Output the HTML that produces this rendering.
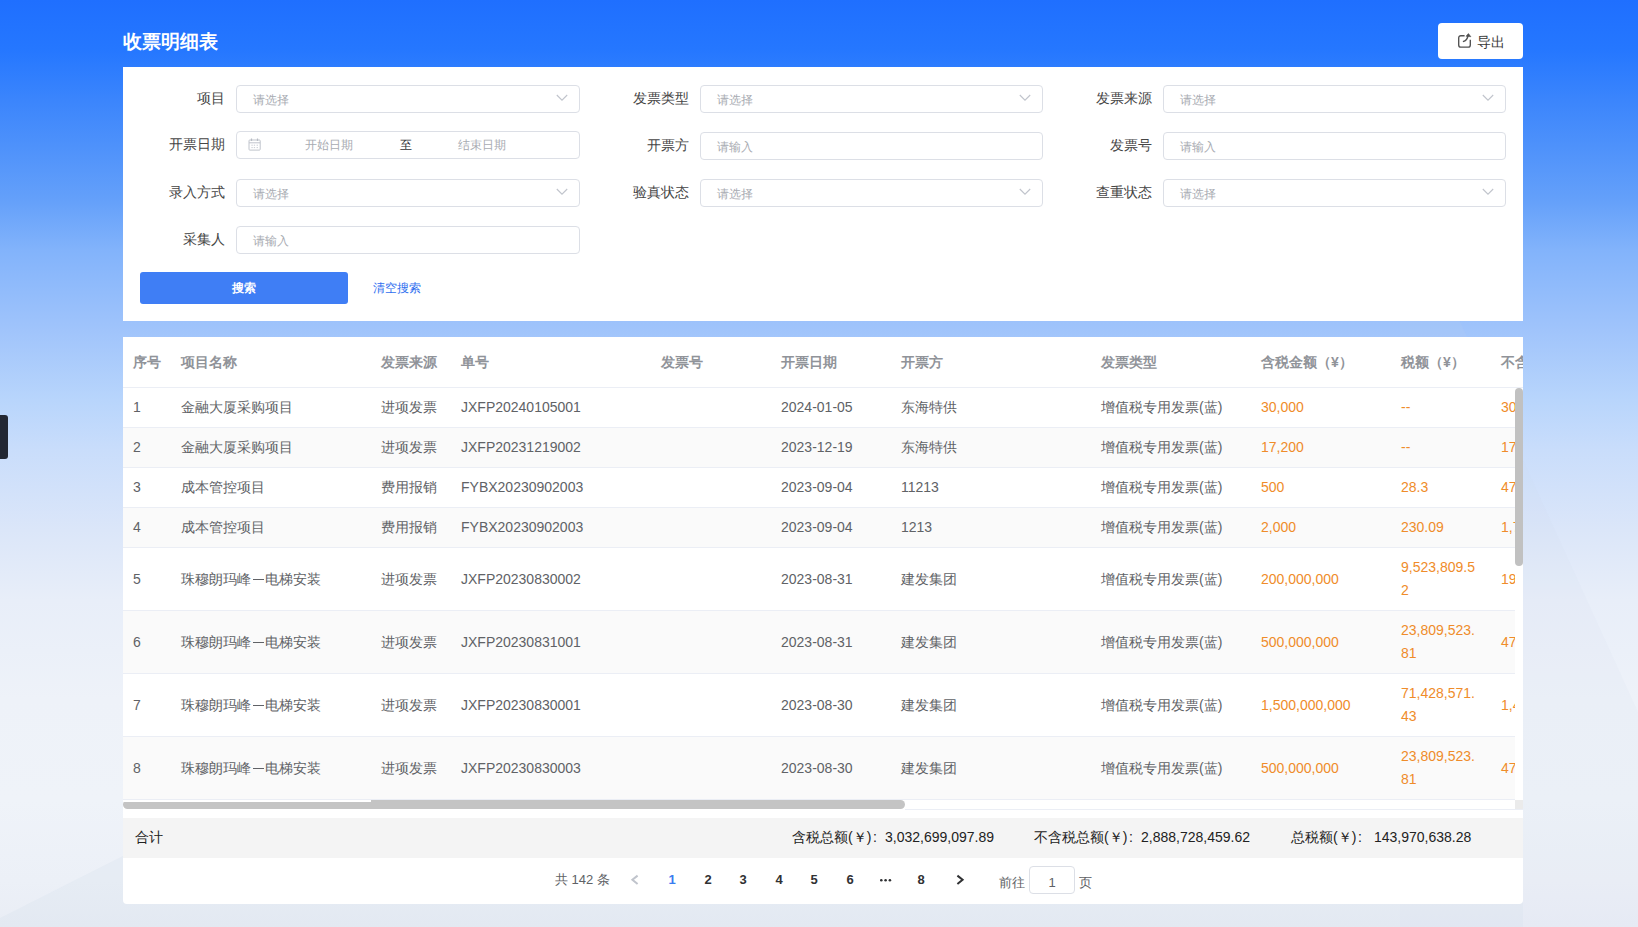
<!DOCTYPE html><html><head><meta charset="utf-8"><style>
*{box-sizing:border-box;margin:0;padding:0}
html,body{width:1638px;height:927px;overflow:hidden}
body{position:relative;font-family:"Liberation Sans",sans-serif;color:#606266;
background:linear-gradient(180deg,#1f6fff 0px,#2577ff 50px,#3b85fc 100px,#64a0fa 200px,#82b3fb 250px,#a0c4fb 330px,#b8d5fc 400px,#c9ddfb 450px,#dbe6f9 530px,#e8eef9 600px,#eef2f9 700px,#eff3f9 800px,#ecf0f7 880px,#e9edf5 927px)}
.a{position:absolute}
.title{left:123px;top:31px;font-size:19px;line-height:21px;font-weight:bold;color:#fff;white-space:nowrap}
.export{left:1438px;top:23px;width:85px;height:36px;background:#fff;border-radius:4px}
.export span{position:absolute;left:39px;top:11px;font-size:14px;line-height:16px;color:#3a3a3a}
.card1{left:123px;top:67px;width:1400px;height:254px;background:#fff}
.lbl{font-size:14px;color:#454545;text-align:right;width:120px;line-height:26px;white-space:nowrap}
.inp{height:28px;border:1px solid #dcdfe6;border-radius:4px;background:#fff;font-size:12px;color:#a8abb2;line-height:26px;padding-left:16px;padding-top:1px;white-space:nowrap}
.btn{left:140px;top:272px;width:208px;height:32px;background:#3f7ef5;border-radius:3px;color:#fff;font-size:12px;font-weight:bold;text-align:center;line-height:33px}
.link{left:373px;top:280px;font-size:12px;color:#2f6fef;line-height:16px;white-space:nowrap}
.card2{left:123px;top:337px;width:1400px;height:567px;background:#fff;border-radius:0 0 4px 4px;overflow:hidden}
.th{top:0;height:50px;line-height:50px;font-size:14px;font-weight:bold;color:#909399;white-space:nowrap}
.td{font-size:14px;line-height:23px;color:#606266;white-space:nowrap}
.or{color:#ef8c2a}
.dash{display:inline-block;width:14px;height:23px;position:relative;vertical-align:top}
.dash:after{content:'';position:absolute;left:2px;right:1px;top:11px;height:1px;background:#606266}
.st{font-size:14px;line-height:22px;color:#222;white-space:nowrap}
.pg{font-size:13px;line-height:18px;font-weight:bold;white-space:nowrap}
.tab{left:0;top:415px;width:8px;height:44px;background:#222733;border-radius:0 3px 3px 0}
</style></head><body>
<svg class="a" style="left:0;top:0" width="1638" height="927"><polygon points="1400,190 1638,712 1638,927 1400,927" fill="#cfd9e8" fill-opacity="0.1"/><polygon points="0,927 0,918 123,856 1523,856 1523,927" fill="#d5deea" fill-opacity="0.25"/></svg>
<div class="a title">收票明细表</div>
<div class="a export"><svg class="a" style="left:19px;top:10px" width="16" height="16" viewBox="0 0 16 16"><path d="M7.6 2.7H3.9A2.2 2.2 0 0 0 1.7 4.9v7a2.2 2.2 0 0 0 2.2 2.2h7.2a2.2 2.2 0 0 0 2.2-2.2V6.7" fill="none" stroke="#505050" stroke-width="1.35"/><path d="M5.9 8.6C8.6 8.1 10.6 6.6 11.1 2.2" fill="none" stroke="#505050" stroke-width="1.35"/><path d="M9 3.3L11.4 0.6L13.9 3.7Z" fill="#505050" stroke="#505050" stroke-width="0.6" stroke-linejoin="round"/></svg><span>导出</span></div>
<div class="a card1"></div>
<div class="a lbl" style="left:104.5px;top:85px">项目</div>
<div class="a inp" style="left:236px;top:85px;width:344px">请选择<svg class="a" style="right:11.5px;top:8px" width="12" height="8" viewBox="0 0 12 8"><polyline points="0.8,1 6,6.2 11.2,1" fill="none" stroke="#c0c4cc" stroke-width="1.1"/></svg></div>
<div class="a lbl" style="left:568.5px;top:85px">发票类型</div>
<div class="a inp" style="left:700px;top:85px;width:343px">请选择<svg class="a" style="right:11.5px;top:8px" width="12" height="8" viewBox="0 0 12 8"><polyline points="0.8,1 6,6.2 11.2,1" fill="none" stroke="#c0c4cc" stroke-width="1.1"/></svg></div>
<div class="a lbl" style="left:1031.5px;top:85px">发票来源</div>
<div class="a inp" style="left:1163px;top:85px;width:343px">请选择<svg class="a" style="right:11.5px;top:8px" width="12" height="8" viewBox="0 0 12 8"><polyline points="0.8,1 6,6.2 11.2,1" fill="none" stroke="#c0c4cc" stroke-width="1.1"/></svg></div>
<div class="a lbl" style="left:104.5px;top:131px">开票日期</div>
<div class="a inp" style="left:236px;top:131px;width:344px;padding:0"><svg class="a" style="left:10px;top:6px" width="16" height="14" viewBox="0 0 16 14"><rect x="2" y="2" width="11.2" height="10.1" rx="0.8" fill="none" stroke="#c0c4cc" stroke-width="1"/><line x1="2" y1="4.8" x2="13.2" y2="4.8" stroke="#c0c4cc" stroke-width="1"/><line x1="4.5" y1="0.5" x2="4.5" y2="3" stroke="#b8bcc4" stroke-width="1.2"/><line x1="10.5" y1="0.5" x2="10.5" y2="3" stroke="#b8bcc4" stroke-width="1.2"/><g fill="#c8cbd2"><rect x="4.4" y="6.7" width="1.3" height="1"/><rect x="6.8" y="6.7" width="1.3" height="1"/><rect x="9.6" y="6.7" width="1.3" height="1"/><rect x="4.4" y="9.1" width="1.3" height="1"/><rect x="6.8" y="9.1" width="1.3" height="1"/><rect x="9.6" y="9.1" width="1.3" height="1"/></g></svg><span class="a" style="left:68px;top:0">开始日期</span><span class="a" style="left:163px;top:0;color:#303133">至</span><span class="a" style="left:221px;top:0">结束日期</span></div>
<div class="a lbl" style="left:568.5px;top:132px">开票方</div>
<div class="a inp" style="left:700px;top:132px;width:343px">请输入</div>
<div class="a lbl" style="left:1031.5px;top:132px">发票号</div>
<div class="a inp" style="left:1163px;top:132px;width:343px">请输入</div>
<div class="a lbl" style="left:104.5px;top:179px">录入方式</div>
<div class="a inp" style="left:236px;top:179px;width:344px">请选择<svg class="a" style="right:11.5px;top:8px" width="12" height="8" viewBox="0 0 12 8"><polyline points="0.8,1 6,6.2 11.2,1" fill="none" stroke="#c0c4cc" stroke-width="1.1"/></svg></div>
<div class="a lbl" style="left:568.5px;top:179px">验真状态</div>
<div class="a inp" style="left:700px;top:179px;width:343px">请选择<svg class="a" style="right:11.5px;top:8px" width="12" height="8" viewBox="0 0 12 8"><polyline points="0.8,1 6,6.2 11.2,1" fill="none" stroke="#c0c4cc" stroke-width="1.1"/></svg></div>
<div class="a lbl" style="left:1031.5px;top:179px">查重状态</div>
<div class="a inp" style="left:1163px;top:179px;width:343px">请选择<svg class="a" style="right:11.5px;top:8px" width="12" height="8" viewBox="0 0 12 8"><polyline points="0.8,1 6,6.2 11.2,1" fill="none" stroke="#c0c4cc" stroke-width="1.1"/></svg></div>
<div class="a lbl" style="left:104.5px;top:226px">采集人</div>
<div class="a inp" style="left:236px;top:226px;width:344px">请输入</div>
<div class="a btn">搜索</div>
<div class="a link">清空搜索</div>
<div class="a card2">
<div class="a th" style="left:10px">序号</div>
<div class="a th" style="left:58px">项目名称</div>
<div class="a th" style="left:258px">发票来源</div>
<div class="a th" style="left:338px">单号</div>
<div class="a th" style="left:538px">发票号</div>
<div class="a th" style="left:658px">开票日期</div>
<div class="a th" style="left:778px">开票方</div>
<div class="a th" style="left:978px">发票类型</div>
<div class="a th" style="left:1138px">含税金额（¥）</div>
<div class="a th" style="left:1278px">税额（¥）</div>
<div class="a th" style="left:1378px">不含税金额（¥）</div>
<div class="a" style="left:0;top:50px;width:1400px;height:1px;background:#ebeef5"></div>
<div class="a" style="left:0;top:51px;width:1392px;height:412px;overflow:hidden">
<div class="a" style="left:0;top:0px;width:1400px;height:39px;background:#fff"></div>
<div class="a" style="left:0;top:39px;width:1400px;height:1px;background:#ebeef5"></div>
<div class="a td" style="left:10px;top:8px">1</div>
<div class="a td" style="left:58px;top:8px">金融大厦采购项目</div>
<div class="a td" style="left:258px;top:8px">进项发票</div>
<div class="a td" style="left:338px;top:8px">JXFP20240105001</div>
<div class="a td" style="left:658px;top:8px">2024-01-05</div>
<div class="a td" style="left:778px;top:8px">东海特供</div>
<div class="a td" style="left:978px;top:8px">增值税专用发票(蓝)</div>
<div class="a td or" style="left:1138px;top:8px">30,000</div>
<div class="a td or" style="left:1278px;top:8px">--</div>
<div class="a td or" style="left:1378px;top:8px">30,000</div>
<div class="a" style="left:0;top:40px;width:1400px;height:39px;background:#fafafa"></div>
<div class="a" style="left:0;top:79px;width:1400px;height:1px;background:#ebeef5"></div>
<div class="a td" style="left:10px;top:48px">2</div>
<div class="a td" style="left:58px;top:48px">金融大厦采购项目</div>
<div class="a td" style="left:258px;top:48px">进项发票</div>
<div class="a td" style="left:338px;top:48px">JXFP20231219002</div>
<div class="a td" style="left:658px;top:48px">2023-12-19</div>
<div class="a td" style="left:778px;top:48px">东海特供</div>
<div class="a td" style="left:978px;top:48px">增值税专用发票(蓝)</div>
<div class="a td or" style="left:1138px;top:48px">17,200</div>
<div class="a td or" style="left:1278px;top:48px">--</div>
<div class="a td or" style="left:1378px;top:48px">17,200</div>
<div class="a" style="left:0;top:80px;width:1400px;height:39px;background:#fff"></div>
<div class="a" style="left:0;top:119px;width:1400px;height:1px;background:#ebeef5"></div>
<div class="a td" style="left:10px;top:88px">3</div>
<div class="a td" style="left:58px;top:88px">成本管控项目</div>
<div class="a td" style="left:258px;top:88px">费用报销</div>
<div class="a td" style="left:338px;top:88px">FYBX20230902003</div>
<div class="a td" style="left:658px;top:88px">2023-09-04</div>
<div class="a td" style="left:778px;top:88px">11213</div>
<div class="a td" style="left:978px;top:88px">增值税专用发票(蓝)</div>
<div class="a td or" style="left:1138px;top:88px">500</div>
<div class="a td or" style="left:1278px;top:88px">28.3</div>
<div class="a td or" style="left:1378px;top:88px">471.7</div>
<div class="a" style="left:0;top:120px;width:1400px;height:39px;background:#fafafa"></div>
<div class="a" style="left:0;top:159px;width:1400px;height:1px;background:#ebeef5"></div>
<div class="a td" style="left:10px;top:128px">4</div>
<div class="a td" style="left:58px;top:128px">成本管控项目</div>
<div class="a td" style="left:258px;top:128px">费用报销</div>
<div class="a td" style="left:338px;top:128px">FYBX20230902003</div>
<div class="a td" style="left:658px;top:128px">2023-09-04</div>
<div class="a td" style="left:778px;top:128px">1213</div>
<div class="a td" style="left:978px;top:128px">增值税专用发票(蓝)</div>
<div class="a td or" style="left:1138px;top:128px">2,000</div>
<div class="a td or" style="left:1278px;top:128px">230.09</div>
<div class="a td or" style="left:1378px;top:128px">1,769.91</div>
<div class="a" style="left:0;top:160px;width:1400px;height:62px;background:#fff"></div>
<div class="a" style="left:0;top:222px;width:1400px;height:1px;background:#ebeef5"></div>
<div class="a td" style="left:10px;top:180px">5</div>
<div class="a td" style="left:58px;top:180px">珠穆朗玛峰<i class=dash></i>电梯安装</div>
<div class="a td" style="left:258px;top:180px">进项发票</div>
<div class="a td" style="left:338px;top:180px">JXFP20230830002</div>
<div class="a td" style="left:658px;top:180px">2023-08-31</div>
<div class="a td" style="left:778px;top:180px">建发集团</div>
<div class="a td" style="left:978px;top:180px">增值税专用发票(蓝)</div>
<div class="a td or" style="left:1138px;top:180px">200,000,000</div>
<div class="a td or" style="left:1278px;top:168px">9,523,809.5<br>2</div>
<div class="a td or" style="left:1378px;top:180px">190,476,190.48</div>
<div class="a" style="left:0;top:223px;width:1400px;height:62px;background:#fafafa"></div>
<div class="a" style="left:0;top:285px;width:1400px;height:1px;background:#ebeef5"></div>
<div class="a td" style="left:10px;top:243px">6</div>
<div class="a td" style="left:58px;top:243px">珠穆朗玛峰<i class=dash></i>电梯安装</div>
<div class="a td" style="left:258px;top:243px">进项发票</div>
<div class="a td" style="left:338px;top:243px">JXFP20230831001</div>
<div class="a td" style="left:658px;top:243px">2023-08-31</div>
<div class="a td" style="left:778px;top:243px">建发集团</div>
<div class="a td" style="left:978px;top:243px">增值税专用发票(蓝)</div>
<div class="a td or" style="left:1138px;top:243px">500,000,000</div>
<div class="a td or" style="left:1278px;top:231px">23,809,523.<br>81</div>
<div class="a td or" style="left:1378px;top:243px">476,190,476.19</div>
<div class="a" style="left:0;top:286px;width:1400px;height:62px;background:#fff"></div>
<div class="a" style="left:0;top:348px;width:1400px;height:1px;background:#ebeef5"></div>
<div class="a td" style="left:10px;top:306px">7</div>
<div class="a td" style="left:58px;top:306px">珠穆朗玛峰<i class=dash></i>电梯安装</div>
<div class="a td" style="left:258px;top:306px">进项发票</div>
<div class="a td" style="left:338px;top:306px">JXFP20230830001</div>
<div class="a td" style="left:658px;top:306px">2023-08-30</div>
<div class="a td" style="left:778px;top:306px">建发集团</div>
<div class="a td" style="left:978px;top:306px">增值税专用发票(蓝)</div>
<div class="a td or" style="left:1138px;top:306px">1,500,000,000</div>
<div class="a td or" style="left:1278px;top:294px">71,428,571.<br>43</div>
<div class="a td or" style="left:1378px;top:306px">1,428,571,428.57</div>
<div class="a" style="left:0;top:349px;width:1400px;height:62px;background:#fafafa"></div>
<div class="a" style="left:0;top:411px;width:1400px;height:1px;background:#ebeef5"></div>
<div class="a td" style="left:10px;top:369px">8</div>
<div class="a td" style="left:58px;top:369px">珠穆朗玛峰<i class=dash></i>电梯安装</div>
<div class="a td" style="left:258px;top:369px">进项发票</div>
<div class="a td" style="left:338px;top:369px">JXFP20230830003</div>
<div class="a td" style="left:658px;top:369px">2023-08-30</div>
<div class="a td" style="left:778px;top:369px">建发集团</div>
<div class="a td" style="left:978px;top:369px">增值税专用发票(蓝)</div>
<div class="a td or" style="left:1138px;top:369px">500,000,000</div>
<div class="a td or" style="left:1278px;top:357px">23,809,523.<br>81</div>
<div class="a td or" style="left:1378px;top:369px">476,190,476.19</div>
</div>
<div class="a" style="left:1392px;top:51px;width:8px;height:178px;background:#c1c1c1;border-radius:4px"></div>
<div class="a" style="left:0;top:463px;width:782px;height:9px;background:#c4c4c4;border-radius:4.5px"></div>
<div class="a" style="left:0;top:463px;width:248px;height:2px;background:#fff"></div>
<div class="a" style="left:1392px;top:463px;width:8px;height:9px;background:#ebebeb"></div>
<div class="a" style="left:782px;top:472px;width:618px;height:1px;background:#ebeef5"></div>
<div class="a sum" style="left:0;top:481px;width:1400px;height:40px;background:#f4f4f4"></div>
<div class="a st" style="left:12px;top:489px">合计</div>
<div class="a st" style="left:669px;top:489px">含税总额(￥)</div>
<div class="a st" style="left:750px;top:489px">:</div>
<div class="a st" style="left:762px;top:489px">3,032,699,097.89</div>
<div class="a st" style="left:911px;top:489px">不含税总额(￥)</div>
<div class="a st" style="left:1006px;top:489px">:</div>
<div class="a st" style="left:1018px;top:489px">2,888,728,459.62</div>
<div class="a st" style="left:1168px;top:489px">总税额(￥)</div>
<div class="a st" style="left:1235px;top:489px">:</div>
<div class="a st" style="left:1251px;top:489px">143,970,638.28</div>
<svg class="a" style="left:755px;top:538px" width="16" height="8" viewBox="0 0 16 8"><g fill="#303133"><circle cx="3.3" cy="5.3" r="1.3"/><circle cx="7.6" cy="5.3" r="1.3"/><circle cx="11.9" cy="5.3" r="1.3"/></g></svg>
<div class="a pg" style="left:432px;top:534px;color:#606266;font-weight:normal">共 142 条</div>
<svg class="a" style="left:506px;top:536px" width="12" height="14" viewBox="0 0 12 14"><polyline points="8.6,2.6 3.4,6.8 8.6,11" fill="none" stroke="#c0c4cc" stroke-width="2"/></svg>
<div class="a pg" style="left:531px;top:534px;width:36px;text-align:center;color:#3a7cf0">1</div>
<div class="a pg" style="left:567px;top:534px;width:36px;text-align:center;color:#303133">2</div>
<div class="a pg" style="left:602px;top:534px;width:36px;text-align:center;color:#303133">3</div>
<div class="a pg" style="left:638px;top:534px;width:36px;text-align:center;color:#303133">4</div>
<div class="a pg" style="left:673px;top:534px;width:36px;text-align:center;color:#303133">5</div>
<div class="a pg" style="left:709px;top:534px;width:36px;text-align:center;color:#303133">6</div>
<div class="a pg" style="left:780px;top:534px;width:36px;text-align:center;color:#303133">8</div>
<svg class="a" style="left:831px;top:536px" width="12" height="14" viewBox="0 0 12 14"><polyline points="3.4,2.6 8.6,6.8 3.4,11" fill="none" stroke="#303133" stroke-width="2"/></svg>
<div class="a pg" style="left:876px;top:537px;color:#606266;font-weight:normal">前往</div>
<div class="a" style="left:906px;top:529px;width:46px;height:28px;border:1px solid #dcdfe6;border-radius:4px;text-align:center;font-size:13px;line-height:26px;color:#606266;padding-top:3px">1</div>
<div class="a pg" style="left:956px;top:537px;color:#606266;font-weight:normal">页</div>
</div>
<div class="a tab"></div>
</body></html>
